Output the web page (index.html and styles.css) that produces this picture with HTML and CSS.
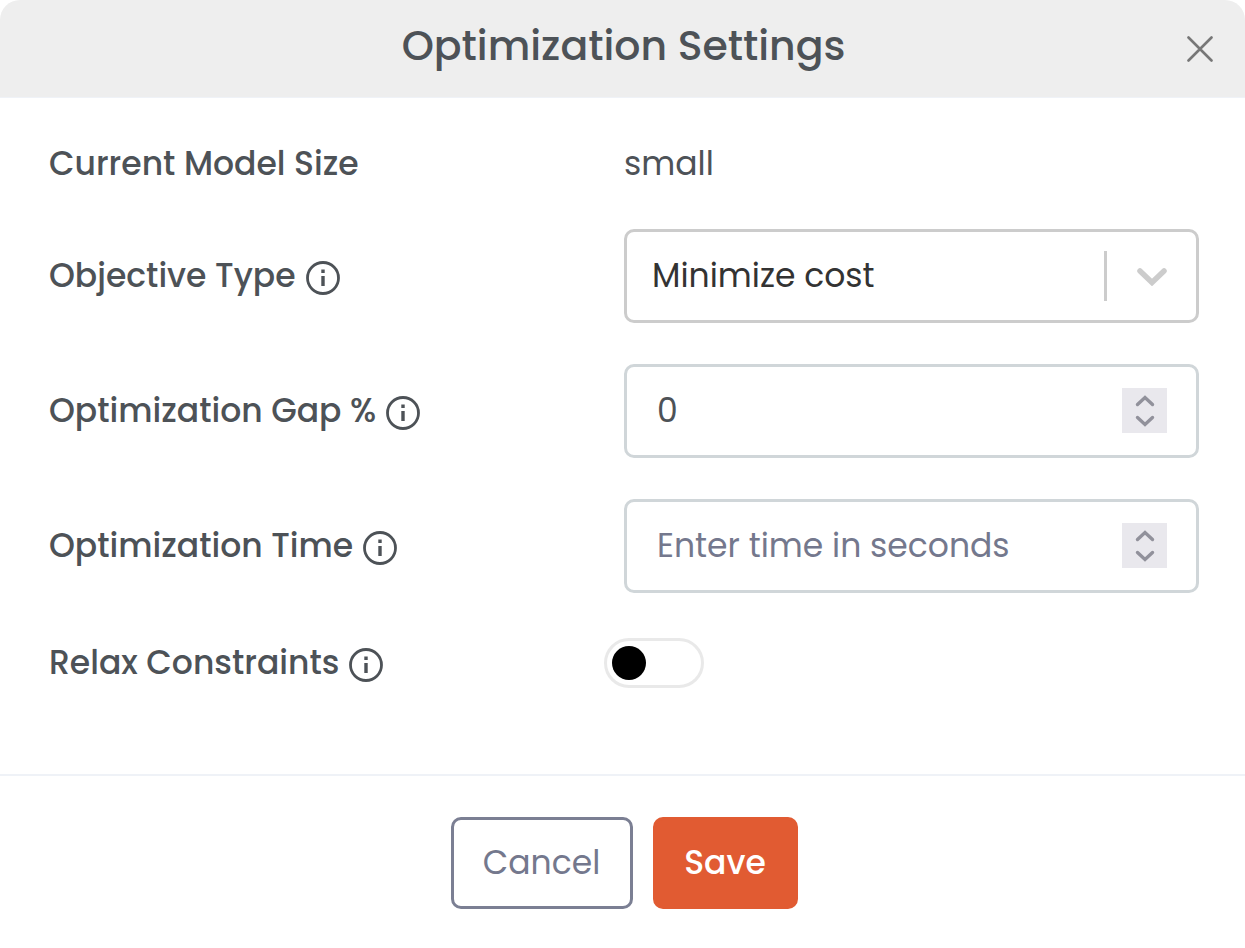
FILE: index.html
```
<!DOCTYPE html>
<html lang="en">
<head>
    <meta charset="UTF-8">
    <meta name="viewport" content="width=device-width, initial-scale=1.0">
    <title>Optimization Settings</title>
    <link rel="stylesheet" href="styles.css">
</head>
<body>
    <svg width="0" height="0" class="sprite" aria-hidden="true">
        <symbol id="icon-info" viewBox="0 0 34 34">
            <circle cx="17" cy="17" r="15.5" fill="none" stroke="currentColor" stroke-width="2.8"/>
            <path d="M15.3 8.5h3.4v3.4h-3.4zM15.3 15h3.4v10h-3.4z" fill="currentColor"/>
        </symbol>
        <symbol id="icon-up" viewBox="0 0 20 12">
            <path d="M2.5 9.5L10 2.5l7.5 7" fill="none" stroke="currentColor" stroke-width="3.4" stroke-linecap="round"/>
        </symbol>
        <symbol id="icon-down" viewBox="0 0 20 12">
            <path d="M2.5 2.5L10 9.5l7.5-7" fill="none" stroke="currentColor" stroke-width="3.4" stroke-linecap="round"/>
        </symbol>
    </svg>

    <form class="modal" id="settings-form">
        <header class="modal-header">
            <h1>Optimization Settings</h1>
            <button type="button" class="close-btn" aria-label="Close">
                <svg viewBox="0 0 26 26"><path d="M1.5 1.5l23 23M24.5 1.5l-23 23" fill="none" stroke="currentColor" stroke-width="2.6" stroke-linecap="round"/></svg>
            </button>
        </header>

        <div class="modal-body">
            <div class="row">
                <span class="label">Current Model Size</span>
                <span class="value">small</span>
            </div>

            <div class="row">
                <div class="label">
                    <label for="objective">Objective Type</label>
                    <svg class="info"><use href="#icon-info"/></svg>
                </div>
                <div class="field">
                    <select id="objective" name="objective">
                        <option>Minimize cost</option>
                        <option>Maximize profit</option>
                    </select>
                    <span class="indicator">
                        <svg viewBox="0 0 30 18"><path d="M3 3l12 11.5L27 3" fill="none" stroke="currentColor" stroke-width="5.5" stroke-linecap="round"/></svg>
                    </span>
                </div>
            </div>

            <div class="row">
                <div class="label">
                    <label for="gap">Optimization Gap %</label>
                    <svg class="info"><use href="#icon-info"/></svg>
                </div>
                <div class="field">
                    <input type="number" id="gap" name="gap" value="0">
                    <span class="stepper">
                        <button type="button" aria-label="Increase gap"><svg><use href="#icon-up"/></svg></button>
                        <button type="button" aria-label="Decrease gap"><svg><use href="#icon-down"/></svg></button>
                    </span>
                </div>
            </div>

            <div class="row">
                <div class="label">
                    <label for="time">Optimization Time</label>
                    <svg class="info"><use href="#icon-info"/></svg>
                </div>
                <div class="field">
                    <input type="number" id="time" name="time" placeholder="Enter time in seconds">
                    <span class="stepper">
                        <button type="button" aria-label="Increase time"><svg><use href="#icon-up"/></svg></button>
                        <button type="button" aria-label="Decrease time"><svg><use href="#icon-down"/></svg></button>
                    </span>
                </div>
            </div>

            <div class="row row-switch">
                <div class="label">
                    <label for="relax">Relax Constraints</label>
                    <svg class="info"><use href="#icon-info"/></svg>
                </div>
                <input type="checkbox" class="switch" id="relax" name="relax">
            </div>
        </div>

        <footer class="modal-footer">
            <button type="button" class="btn btn-cancel">Cancel</button>
            <button type="submit" class="btn btn-save">Save</button>
        </footer>
    </form>

    <script>
        document.querySelectorAll('.stepper').forEach((stepper) => {
            const input = stepper.previousElementSibling;
            const [up, down] = stepper.querySelectorAll('button');
            up.addEventListener('click', () => input.stepUp());
            down.addEventListener('click', () => input.stepDown());
        });

        document.getElementById('settings-form').addEventListener('submit', (e) => {
            e.preventDefault();
        });
    </script>
</body>
</html>
```

FILE: styles.css
```
* { margin: 0; padding: 0; box-sizing: border-box; }
body { font-family: Poppins, Inter, sans-serif; font-size: 33px; line-height: 48px; background-color: #fff; color: #4d5257; }
button, input, select { font: inherit; color: inherit; }
button { cursor: pointer; }
svg { display: block; }
.sprite { position: absolute; }

.modal { background-color: #fff; border-radius: 20px 20px 0 0; overflow: hidden; }
.modal-header { position: relative; padding: 16px 78px 21px 80px; text-align: center; background-color: #eee; border-bottom: 1px solid #eff2f7; }
h1 { font-size: 41px; font-weight: 500; line-height: 60px; }
.close-btn { position: absolute; top: 36px; right: 32px; width: 26px; height: 26px; border: none; background: none; color: #777; }

.modal-body { display: flex; flex-direction: column; gap: 41px; padding: 42px 46px 82px 49px; }
.row { display: grid; grid-template-columns: 1fr 1fr; align-items: center; }
.row-switch { min-height: 58px; }
.label { display: flex; align-items: center; gap: 10px; font-weight: 500; }
.info { width: 34px; height: 34px; margin-top: 4px; }

.field { position: relative; }
.field input, .field select { display: block; width: 100%; height: 94px; border: 3px solid #d0d6d9; border-radius: 10px; background-color: #fff; outline: none; appearance: none; }
.field input { padding: 0 90px 0 30px; -moz-appearance: textfield; }
.field input::placeholder { color: #74788d; opacity: 1; }
.field input::-webkit-inner-spin-button { display: none; }
.field select { padding: 0 100px 0 25px; border-color: #ccc; color: #333; }
.indicator { position: absolute; top: 22px; right: 32px; display: flex; align-items: center; height: 50px; padding-left: 30px; border-left: 3px solid #ccc; color: #ccc; pointer-events: none; }
.indicator svg { width: 30px; height: 18px; margin-top: 2px; }
.stepper { position: absolute; top: 24px; right: 32px; display: flex; flex-direction: column; justify-content: center; gap: 8px; width: 45px; height: 45px; background-color: #e9e8ed; color: #91919b; }
.stepper button { border: none; background: none; color: inherit; }
.stepper svg { width: 20px; height: 12px; margin: 0 auto; }

.switch { width: 100px; height: 50px; margin-left: -20px; padding: 5px; border: 3px solid #e9e9e9; border-radius: 25px; background-color: #fff; appearance: none; cursor: pointer; }
.switch::before { content: ""; display: block; width: 34px; height: 34px; border-radius: 50%; background-color: #000; }
.switch:checked::before { margin-left: auto; }

.modal-footer { display: flex; justify-content: center; gap: 20px; padding: 41px 46px 41px 49px; border-top: 2px solid #eff2f7; }
.btn { height: 92px; border: 3px solid; border-radius: 10px; }
.btn-cancel { width: 182px; border-color: #7b7f93; background-color: #fff; color: #74788d; }
.btn-save { width: 145px; border-color: #e15b32; background-color: #e15b32; color: #fff; font-weight: 500; }
```
